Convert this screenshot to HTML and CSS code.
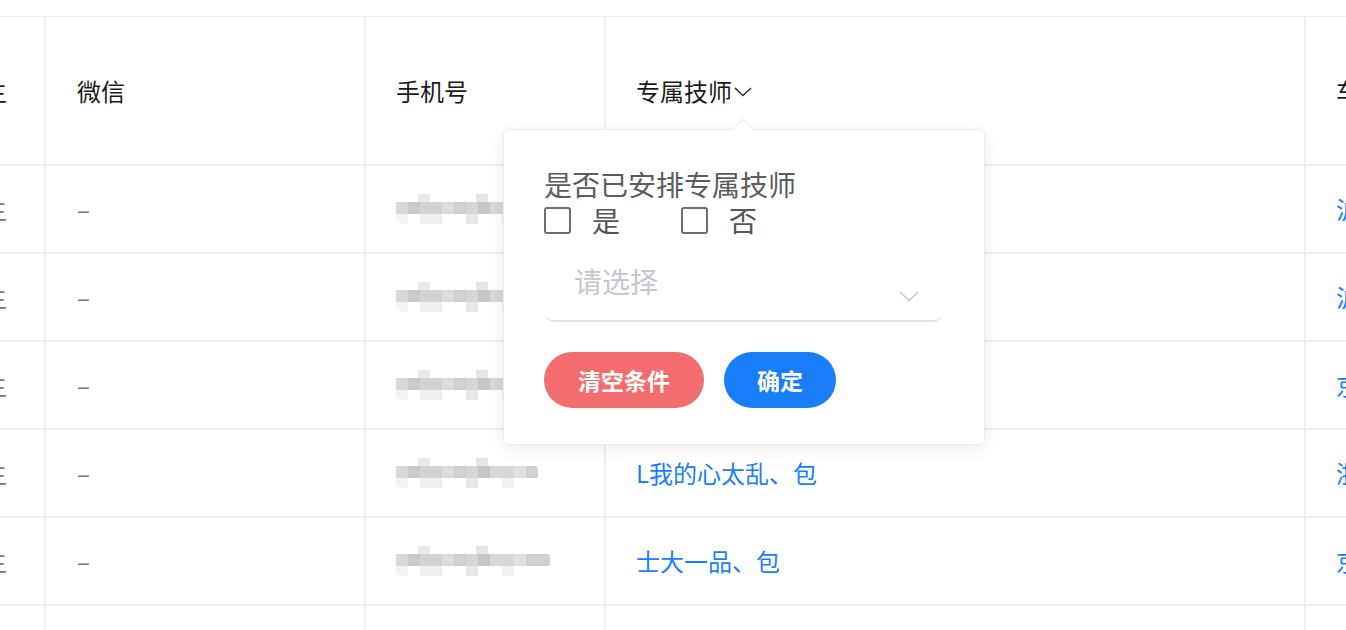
FILE: index.html
```html
<!DOCTYPE html>
<html lang="zh-CN">
<head>
<meta charset="utf-8">
<title>客户列表</title>
<link rel="stylesheet" href="styles.css">
</head>
<body>
<div class="page">
  <div class="table">
    <div class="row head">
      <div class="cell">车主</div>
      <div class="cell">微信</div>
      <div class="cell">手机号</div>
      <div class="cell tech-head">
        <span>专属技师</span>
        <svg class="head-caret" width="18" height="11" viewBox="0 0 18 11"><polyline points="1,2 9,9.5 17,2" fill="none" stroke="#2a2a2a" stroke-width="1.4"/></svg>
        <div class="popover">
          <div class="pop-title">是否已安排专属技师</div>
          <div class="checks">
            <label class="check"><span class="box"></span><span>是</span></label>
            <label class="check"><span class="box"></span><span>否</span></label>
          </div>
          <div class="select">
            <span class="placeholder">请选择</span>
            <svg class="sel-caret" width="20" height="11" viewBox="0 0 20 11"><polyline points="1,1 10,9.5 19,1" fill="none" stroke="#c3c7cf" stroke-width="1.5"/></svg>
          </div>
          <div class="actions">
            <button class="btn btn-clear">清空条件</button>
            <button class="btn btn-ok">确定</button>
          </div>
        </div>
      </div>
      <div class="cell">车牌号</div>
    </div>
    <div class="row">
      <div class="cell muted">车主</div>
      <div class="cell muted">–</div>
      <div class="cell"><span class="mosaic m1"></span></div>
      <div class="cell link">王师傅、包</div>
      <div class="cell link">沪A·K2391</div>
    </div>
    <div class="row">
      <div class="cell muted">车主</div>
      <div class="cell muted">–</div>
      <div class="cell"><span class="mosaic m2"></span></div>
      <div class="cell link">李师傅、包</div>
      <div class="cell link">沪B·D7720</div>
    </div>
    <div class="row">
      <div class="cell muted">车主</div>
      <div class="cell muted">–</div>
      <div class="cell"><span class="mosaic m3"></span></div>
      <div class="cell link">张师傅、包</div>
      <div class="cell link">京A·Q6158</div>
    </div>
    <div class="row">
      <div class="cell muted">车主</div>
      <div class="cell muted">–</div>
      <div class="cell"><span class="mosaic m4"></span></div>
      <div class="cell link">L我的心太乱、包</div>
      <div class="cell link">浙A·M3307</div>
    </div>
    <div class="row">
      <div class="cell muted">车主</div>
      <div class="cell muted">–</div>
      <div class="cell"><span class="mosaic m5"></span></div>
      <div class="cell link">士大一品、包</div>
      <div class="cell link">京B·T9042</div>
    </div>
    <div class="row">
      <div class="cell muted"></div>
      <div class="cell muted"></div>
      <div class="cell"></div>
      <div class="cell"></div>
      <div class="cell"></div>
    </div>
  </div>
</div>
</body>
</html>
```
FILE: styles.css
```css
* { box-sizing: border-box; }
html, body { margin: 0; padding: 0; background: #fff; }
body {
  font-family: "Noto Sans CJK SC", "Noto Sans", sans-serif;
  color: #1f1f1f;
  width: 1346px;
  height: 630px;
  overflow: hidden;
}
.page {
  padding-top: 16px;
  width: 1346px;
  height: 630px;
  overflow: hidden;
}
.table {
  margin-left: -71px;
  width: 1578px;
  border-top: 1px solid #efefef;
}
.row {
  display: grid;
  grid-template-columns: 117px 320px 240px 700px 200px;
  height: 88px;
}
.row.head { height: 149px; }
.cell {
  border-right: 2px solid #efefef;
  border-bottom: 2px solid #efefef;
  padding-left: 30px;
  display: flex;
  align-items: center;
  font-size: 24px;
  line-height: 34px;
  white-space: nowrap;
}
.cell:nth-child(2) { padding-left: 31px; }
.head .cell { color: #1a1a1a; }
.muted { color: #777; }
.link { color: #1a7efb; }

.tech-head { position: relative; z-index: 5; overflow: visible; }
.head-caret { margin-left: 2px; margin-top: 1px; }

.mosaic {
  display: block;
  height: 30px;
  border-radius: 6px 14px 14px 6px;
  filter: blur(0.5px);
  background:
    linear-gradient(90deg, #fff 0 22px, #e9e9e9 22px 34px, #fff 34px 80px, #e4e4e4 80px 92px, #fff 92px) 0 0 / 100% 8px no-repeat,
    linear-gradient(90deg, #d9d9d9 0 12px, #c9c9c9 12px 24px, #d3d3d3 24px 46px, #dddddd 46px 58px, #cfcfcf 58px 70px, #d6d6d6 70px 82px, #c7c7c7 82px 94px, #d8d8d8 94px 118px, #e0e0e0 118px 130px, #d0d0d0 130px) 0 8px / 100% 12px no-repeat,
    linear-gradient(90deg, #f3f3f3 0 12px, #fff 12px 24px, #eeeeee 24px 46px, #fff 46px 70px, #e6e6e6 70px 82px, #fff 82px 106px, #f0f0f0 106px 118px, #fff 118px) 0 20px / 100% 10px no-repeat;
}
.m1 { width: 115px; }
.m2 { width: 120px; }
.m3 { width: 130px; }
.m4 { width: 142px; }
.m5 { width: 154px; }

.popover {
  position: absolute;
  left: -103px;
  top: 112px;
  width: 482px;
  height: 316px;
  background: #fff;
  border: 1px solid #e9ecf2;
  border-radius: 6px;
  box-shadow: 0 4px 16px rgba(0, 0, 0, 0.08);
  padding: 36px 40px 0 40px;
  color: #5c5c5c;
  cursor: default;
}
.popover::before {
  content: "";
  position: absolute;
  left: 231px;
  top: -8px;
  width: 15px;
  height: 15px;
  background: #fff;
  border-top: 1px solid #e9ecf2;
  border-left: 1px solid #e9ecf2;
  transform: rotate(45deg);
}
.pop-title {
  font-size: 28px;
  line-height: 36px;
}
.checks {
  display: flex;
  align-items: center;
  height: 36px;
  font-size: 28px;
  color: #555;
}
.check {
  display: flex;
  align-items: center;
  gap: 21px;
  margin-right: 61px;
}
.box {
  width: 27px;
  height: 27px;
  border: 2px solid #6e6e6e;
  border-radius: 3px;
}
.select {
  margin-top: 11px;
  height: 73px;
  width: 399px;
  display: flex;
  justify-content: space-between;
  align-items: flex-start;
  padding: 14px 24px 0 30px;
  border-bottom: 2px solid #dfe2e8;
  border-radius: 0 0 10px 10px;
}
.placeholder {
  font-size: 28px;
  line-height: 36px;
  color: #c4c7ce;
}
.sel-caret { margin-top: 28px; }
.actions {
  margin-top: 30px;
  display: flex;
  gap: 20px;
}
.btn {
  height: 56px;
  border: none;
  border-radius: 28px;
  color: #fff;
  font-family: "Noto Sans CJK SC", "Noto Sans", sans-serif;
  font-size: 23px;
  font-weight: 700;
  padding: 0;
}
.btn-clear { width: 160px; background: #f46d6e; }
.btn-ok { width: 112px; background: #1a7efb; }
```
